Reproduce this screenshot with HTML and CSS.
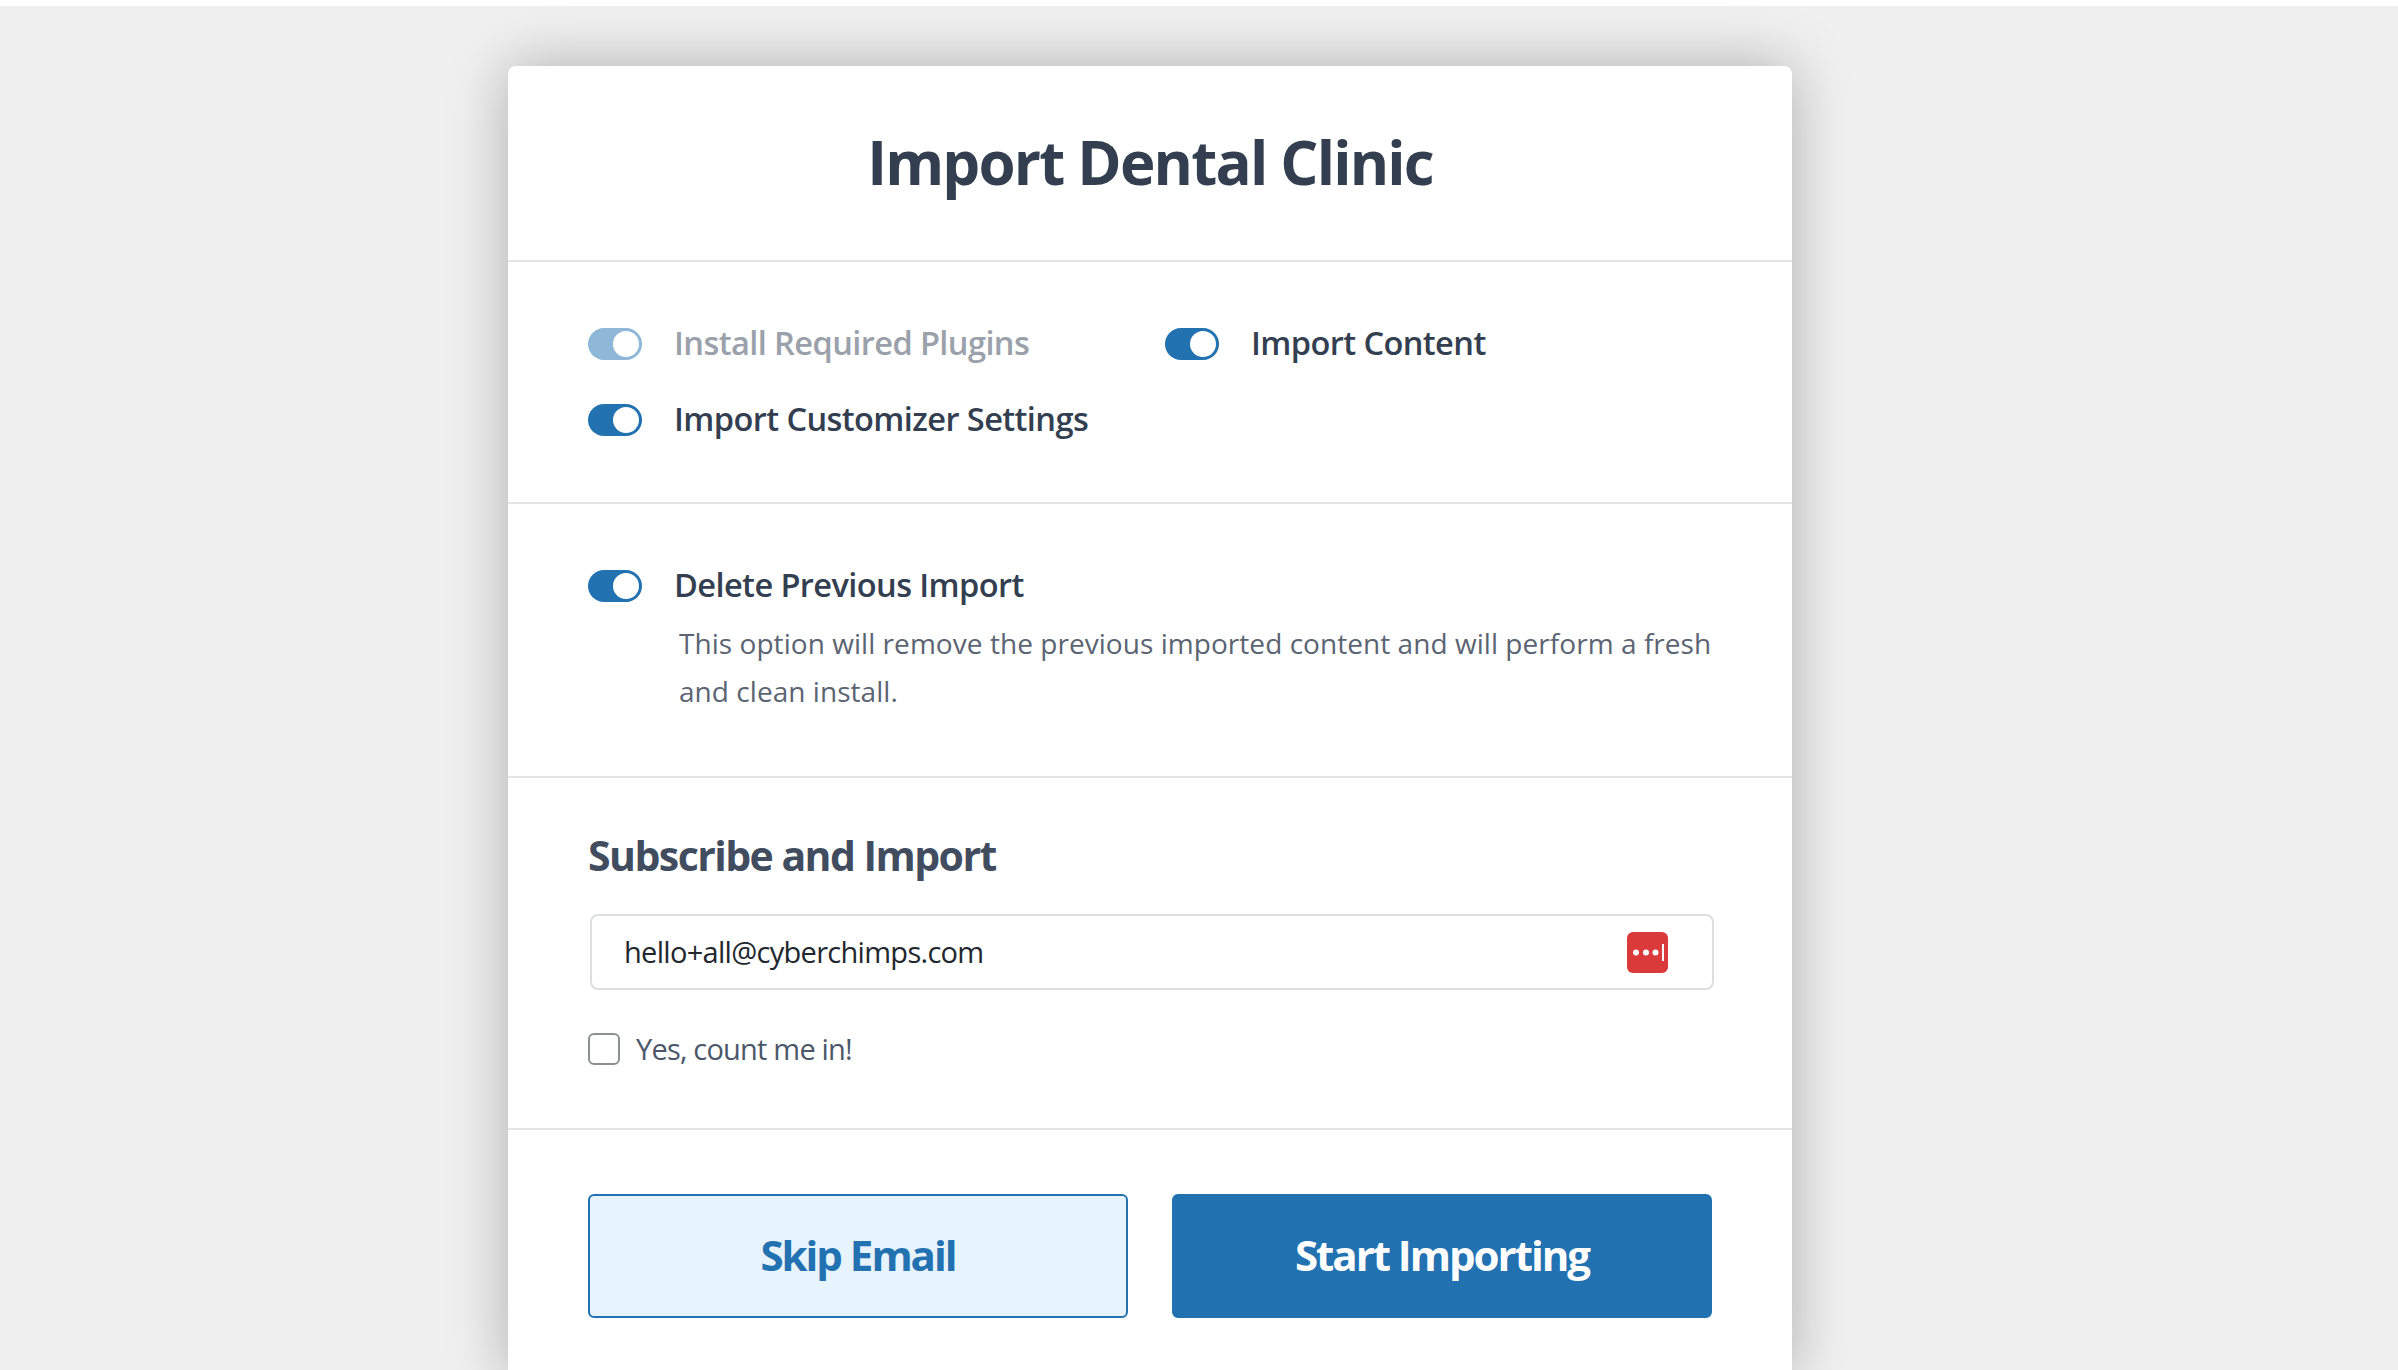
FILE: index.html
```html
<!DOCTYPE html>
<html lang="en">
<head>
    <meta charset="UTF-8">
    <title>Import Dental Clinic</title>
    <link rel="stylesheet" href="styles.css">
</head>
<body>
<div class="topStrip"></div>
<div class="importCard">
    <div class="cardHead">
        <h1>Import Dental Clinic</h1>
    </div>
    <div class="section optionGrid">
        <div class="option disabled"><span class="toggle"></span><span class="optionText">Install Required Plugins</span></div>
        <div class="option"><span class="toggle"></span><span class="optionText">Import Content</span></div>
        <div class="option"><span class="toggle"></span><span class="optionText">Import Customizer Settings</span></div>
    </div>
    <div class="section deleteSection">
        <div class="option"><span class="toggle"></span><span class="optionText">Delete Previous Import</span></div>
        <p class="desc">This option will remove the previous imported content and will perform a fresh and clean install.</p>
    </div>
    <div class="section subscribeSection">
        <h3>Subscribe and Import</h3>
        <div class="emailBox">
            <span class="emailText">hello+all@cyberchimps.com</span>
            <svg class="passIcon" viewBox="0 0 41 41" width="41" height="41">
                <rect width="41" height="41" rx="6" fill="#db3a3a"/>
                <circle cx="9" cy="20.5" r="3" fill="#fff"/>
                <circle cx="19" cy="20.5" r="3" fill="#fff"/>
                <circle cx="28.500" cy="20.5" r="3" fill="#fff"/>
                <rect x="35" y="12" width="2" height="17" fill="#fff"/>
            </svg>
        </div>
        <label class="countMe"><span class="checkBox"></span><span class="countText">Yes, count me in!</span></label>
    </div>
    <div class="section buttonRow">
        <button class="btn btnSkip">Skip Email</button>
        <button class="btn btnStart">Start Importing</button>
    </div>
</div>
</body>
</html>
```

FILE: styles.css
```css
html, body{
    margin: 0;
    height: 100%;
    overflow: hidden;
}
body{
    background-color: #f0f0f0;
    font-family: "Open Sans", "Liberation Sans", sans-serif;
    color: #2f3b4d;
}
.topStrip{
    height: 6px;
    background-color: #fff;
}
.importCard{
    width: 1284px;
    margin: 60px 0 0 508px;
    background-color: #fff;
    border-radius: 8px 8px 0 0;
    box-shadow: 0 0 60px rgba(0, 0, 0, 0.28);
}
.cardHead{
    height: 192px;
    padding-bottom: 2px;
    display: flex;
    align-items: center;
    justify-content: center;
    border-bottom: 2px solid #e5e5e5;
}
h1{
    margin: 0;
    font-size: 60px;
    font-weight: 700;
    letter-spacing: -1.8px;
    color: #333f50;
}
.section{
    padding: 0 80px;
    border-bottom: 2px solid #e5e5e5;
}
.optionGrid{
    display: grid;
    grid-template-columns: 577px 1fr;
    grid-auto-rows: 48px;
    row-gap: 28px;
    padding-top: 58px;
    padding-bottom: 58px;
}
.option{
    display: flex;
    align-items: center;
    gap: 32px;
    height: 48px;
    font-size: 32.6px;
    font-weight: 600;
    letter-spacing: -0.6px;
    color: #333f50;
}
.optionText{
    padding-bottom: 4px;
}
.option.disabled{
    color: #9aa1ab;
}
.toggle{
    width: 54px;
    height: 32px;
    padding: 3px;
    box-sizing: border-box;
    display: flex;
    justify-content: flex-end;
    border-radius: 16px;
    background-color: #2271b1;
}
.toggle::after{
    content: "";
    width: 26px;
    height: 26px;
    border-radius: 50%;
    background-color: #fff;
}
.disabled .toggle{
    opacity: 0.5;
}
.deleteSection{
    padding-top: 58px;
    padding-bottom: 61px;
}
.desc{
    margin: 9px 0 0 91px;
    font-size: 28px;
    line-height: 48px;
    letter-spacing: 0.05px;
    color: #5b6472;
}
.subscribeSection{
    padding-top: 49px;
    padding-bottom: 59px;
}
h3{
    margin: 0 0 31px;
    font-size: 41px;
    line-height: 56px;
    font-weight: 700;
    letter-spacing: -1.55px;
    color: #414d5f;
}
.emailBox{
    height: 76px;
    margin: 0 -2px 0 2px;
    padding: 0 44px 0 32px;
    box-sizing: border-box;
    display: flex;
    align-items: center;
    justify-content: space-between;
    border: 2px solid #dcdee0;
    border-radius: 8px;
    font-size: 29px;
    letter-spacing: -0.7px;
    color: #22272e;
}
.emailText, .countText{
    padding-bottom: 2px;
}
.countMe{
    display: flex;
    align-items: center;
    gap: 16px;
    margin-top: 39px;
    height: 40px;
    font-size: 29px;
    letter-spacing: -0.8px;
    color: #4c5869;
}
.checkBox{
    width: 32px;
    height: 32px;
    box-sizing: border-box;
    border: 2px solid #8c8f94;
    border-radius: 6px;
}
.buttonRow{
    display: flex;
    gap: 44px;
    padding-top: 64px;
    padding-bottom: 60px;
    border-bottom: none;
}
.btn{
    width: 540px;
    height: 124px;
    padding: 0 0 3px;
    box-sizing: border-box;
    border-radius: 6px;
    border: 2px solid #2271b1;
    font-family: inherit;
    font-size: 42px;
    font-weight: 700;
    letter-spacing: -2px;
}
.btnSkip{
    background-color: #e7f3fd;
    color: #2271b1;
}
.btnStart{
    background-color: #2271b1;
    color: #fff;
}
```
